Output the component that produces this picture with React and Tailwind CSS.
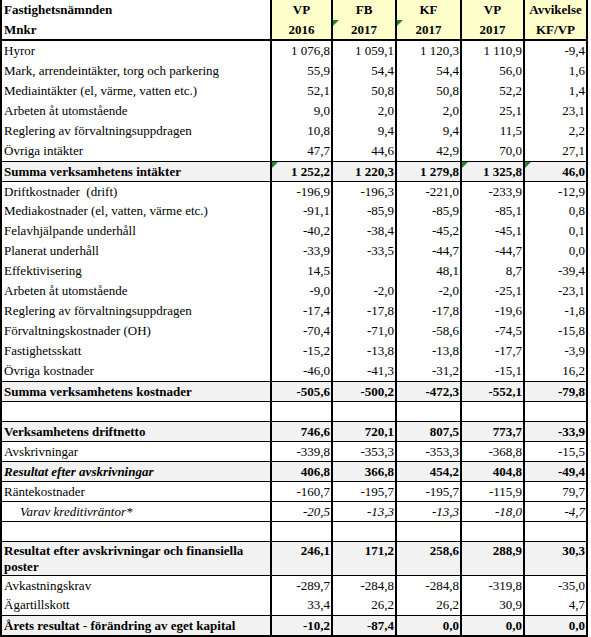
import React from 'react'

// widths include the 2px right border of each cell
const colW = ['w-[61px]', 'w-[64px]', 'w-[65px]', 'w-[63px]', 'w-[63px]']

const rows = [
  { label: 'Hyror', v: ['1 076,8', '1 059,1', '1 120,3', '1 110,9', '-9,4'] },
  { label: 'Mark, arrendeintäkter, torg och parkering', v: ['55,9', '54,4', '54,4', '56,0', '1,6'] },
  { label: 'Mediaintäkter (el, värme, vatten etc.)', v: ['52,1', '50,8', '50,8', '52,2', '1,4'] },
  { label: 'Arbeten åt utomstående', v: ['9,0', '2,0', '2,0', '25,1', '23,1'] },
  { label: 'Reglering av förvaltningsuppdragen', v: ['10,8', '9,4', '9,4', '11,5', '2,2'] },
  { label: 'Övriga intäkter', v: ['47,7', '44,6', '42,9', '70,0', '27,1'] },
  { label: 'Summa verksamhetens intäkter', v: ['1 252,2', '1 220,3', '1 279,8', '1 325,8', '46,0'], kind: 'sum', line: true, marks: [0, 3, 4] },
  { label: 'Driftkostnader\u00a0 (drift)', v: ['-196,9', '-196,3', '-221,0', '-233,9', '-12,9'], line: true },
  { label: 'Mediakostnader (el, vatten, värme etc.)', v: ['-91,1', '-85,9', '-85,9', '-85,1', '0,8'] },
  { label: 'Felavhjälpande underhåll', v: ['-40,2', '-38,4', '-45,2', '-45,1', '0,1'] },
  { label: 'Planerat underhåll', v: ['-33,9', '-33,5', '-44,7', '-44,7', '0,0'] },
  { label: 'Effektivisering', v: ['14,5', '', '48,1', '8,7', '-39,4'] },
  { label: 'Arbeten åt utomstående', v: ['-9,0', '-2,0', '-2,0', '-25,1', '-23,1'] },
  { label: 'Reglering av förvaltningsuppdragen', v: ['-17,4', '-17,8', '-17,8', '-19,6', '-1,8'] },
  { label: 'Förvaltningskostnader (OH)', v: ['-70,4', '-71,0', '-58,6', '-74,5', '-15,8'] },
  { label: 'Fastighetsskatt', v: ['-15,2', '-13,8', '-13,8', '-17,7', '-3,9'] },
  { label: 'Övriga kostnader', v: ['-46,0', '-41,3', '-31,2', '-15,1', '16,2'] },
  { label: 'Summa verksamhetens kostnader', v: ['-505,6', '-500,2', '-472,3', '-552,1', '-79,8'], kind: 'sum', line: true },
  { label: '', v: ['', '', '', '', ''], line: true },
  { label: 'Verksamhetens driftnetto', v: ['746,6', '720,1', '807,5', '773,7', '-33,9'], kind: 'sum', line: true },
  { label: 'Avskrivningar', v: ['-339,8', '-353,3', '-353,3', '-368,8', '-15,5'], line: true },
  { label: 'Resultat efter avskrivningar', v: ['406,8', '366,8', '454,2', '404,8', '-49,4'], kind: 'sum', italicLabel: true, line: true },
  { label: 'Räntekostnader', v: ['-160,7', '-195,7', '-195,7', '-115,9', '79,7'], line: true },
  { label: 'Varav kreditivräntor*', v: ['-20,5', '-13,3', '-13,3', '-18,0', '-4,7'], kind: 'italic', line: true },
  { label: '', v: ['', '', '', '', ''], line: true },
  { label: 'Resultat efter avskrivningar och finansiella poster', v: ['246,1', '171,2', '258,6', '288,9', '30,3'], kind: 'sum', tall: true, line: true },
  { label: 'Avkastningskrav', v: ['-289,7', '-284,8', '-284,8', '-319,8', '-35,0'], line: true },
  { label: 'Ägartillskott', v: ['33,4', '26,2', '26,2', '30,9', '4,7'] },
  { label: 'Årets resultat - förändring av eget kapital', v: ['-10,2', '-87,4', '0,0', '0,0', '0,0'], kind: 'sum', line: true },
]

function Mark({ top = 'top-0' }) {
  return <span className={`absolute left-0 ${top} w-0 h-0 border-t-[6px] border-r-[6px] border-t-[#1f8a2a] border-r-transparent`} />
}

function Row({ row }) {
  const sum = row.kind === 'sum'
  const bg = sum ? 'bg-[#f2f2f2]' : 'bg-white'
  const weight = sum ? 'font-bold' : ''
  const italic = row.kind === 'italic'
  return (
    <div className={`flex border-l-2 border-black ${row.tall ? 'h-[34px]' : 'h-[20px]'} ${row.line ? 'border-t border-t-black' : ''} ${bg}`}>
      <div className={`w-[270px] border-r-2 border-black flex ${row.tall ? 'items-start pt-[1px] leading-[16px]' : 'items-center'} ${italic ? 'pl-[18px] italic' : 'pl-[2px]'} ${weight} ${row.italicLabel ? 'italic' : ''}`}>
        {row.label}
      </div>
      {row.v.map((val, i) => (
        <div key={i} className={`relative ${colW[i]} border-r-2 border-black flex justify-end pr-[1px] whitespace-nowrap ${row.tall ? 'items-start pt-[1px] leading-[16px]' : 'items-center'} ${weight} ${italic ? 'italic' : ''}`}>
          {row.marks && row.marks.includes(i) && <Mark />}
          {val}
        </div>
      ))}
    </div>
  )
}

export default function App() {
  const heads = [['VP', '2016'], ['FB', '2017'], ['KF', '2017'], ['VP', '2017'], ['Avvikelse', 'KF/VP']]
  return (
    <div className="bg-white w-[591px] h-[637px] overflow-hidden text-[13px] text-black" style={{ fontFamily: '"Liberation Serif", "Times New Roman", serif' }}>
      <div className="w-[588px]">
        <div className="flex h-[41px] border-l-2 border-b-2 border-black font-bold">
          <div className="w-[270px] border-r-2 border-black bg-white pl-[2px] flex flex-col">
            <div className="h-[20px] flex items-center">Fastighetsnämnden</div>
            <div className="h-[19px] flex items-center">Mnkr</div>
          </div>
          {heads.map((h, i) => (
            <div key={i} className={`relative ${colW[i]} border-r-2 border-black bg-[#ffffcc] flex flex-col items-center`}>
              {(i === 1 || i === 2) && <Mark top="top-[20px]" />}
              <div className="h-[20px] flex items-center">{h[0]}</div>
              <div className="h-[19px] flex items-center">{h[1]}</div>
            </div>
          ))}
        </div>
        {rows.map((r, i) => (
          <Row key={i} row={r} />
        ))}
        <div className="h-[2px] bg-black" />
      </div>
    </div>
  )
}
